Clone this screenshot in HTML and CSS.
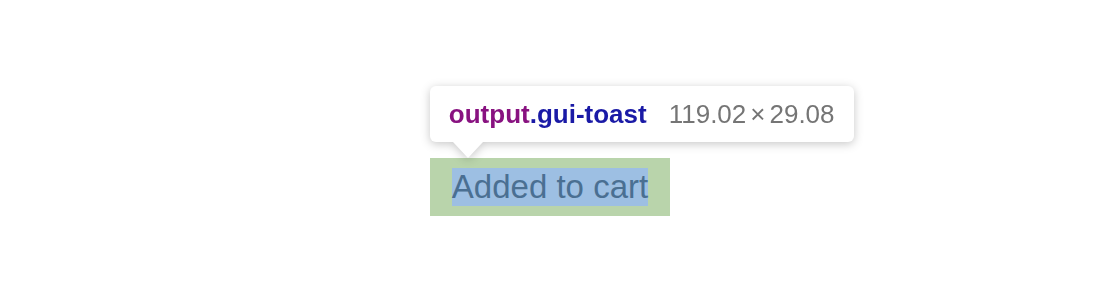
FILE: index.html
```html
<!DOCTYPE html>
<html lang="en">
<head>
  <meta charset="UTF-8" />
  <meta name="viewport" content="width=device-width, initial-scale=1.0" />
  <title>Toast inspect</title>
  <link rel="stylesheet" href="styles.css">
</head>
<body>
  <div class="stage">
    <output class="gui-toast">
      <span class="toast-content">Added to cart</span>
      <div class="inspect-tip">
        <span class="tag">output</span><span class="cls">.gui-toast</span>
        <span class="dims">119.02<span class="times">×</span>29.08</span>
      </div>
    </output>
  </div>
</body>
</html>
```

FILE: styles.css
```css
body {
  margin: 0;
  background-color: #fff;
  font-family: "Liberation Sans", Arial, sans-serif;
}
.stage {
  display: flex;
  justify-content: center;
  padding-top: 158px;
}
.gui-toast {
  position: relative;
  display: block;
  padding: 10px 22px;
  background-color: #b9d4ab;
}
.toast-content {
  display: block;
  font-size: 33px;
  line-height: 38px;
  color: #4a6f92;
  background-color: #9dbfe3;
  white-space: nowrap;
}
.inspect-tip {
  position: absolute;
  left: 0;
  bottom: calc(100% + 16px);
  display: flex;
  align-items: center;
  height: 56px;
  padding: 0 19px;
  background-color: #fff;
  border-radius: 6px;
  white-space: nowrap;
  font-size: 26px;
  filter: drop-shadow(0 2px 5px rgba(0, 0, 0, 0.22));
}
.inspect-tip::after {
  content: "";
  position: absolute;
  left: 23px;
  top: 100%;
  border-left: 15px solid transparent;
  border-right: 15px solid transparent;
  border-top: 16px solid #fff;
}
.tag {
  color: #881280;
  font-weight: bold;
}
.cls {
  color: #1a1aa6;
  font-weight: bold;
}
.dims {
  margin-left: 22px;
  color: #757575;
}
.times {
  margin: 0 4px;
}
```
